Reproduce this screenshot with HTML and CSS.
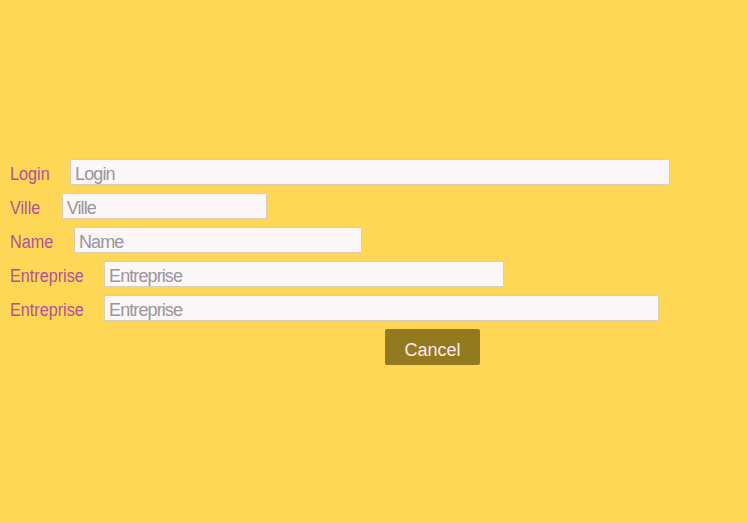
FILE: index.html
```html
<!DOCTYPE html>
<html>
<head>
<meta charset="utf-8">
<link rel="stylesheet" href="styles.css">
</head>
<body>
<form class="form">
  <div class="row"><label class="lbl">Login</label><input class="inp w-login" placeholder="Login"></div>
  <div class="row"><label class="lbl">Ville</label><input class="inp w-ville" placeholder="Ville"></div>
  <div class="row"><label class="lbl">Name</label><input class="inp w-name" placeholder="Name"></div>
  <div class="row"><label class="lbl">Entreprise</label><input class="inp w-ent1" placeholder="Entreprise"></div>
  <div class="row"><label class="lbl">Entreprise</label><input class="inp w-ent2" placeholder="Entreprise"></div>
  <div class="actions"><button type="button" class="btn">Cancel</button></div>
</form>
</body>
</html>
```
FILE: styles.css
```css
html, body {
  margin: 0;
  padding: 0;
  background: #ffd757;
  height: 100%;
}
body {
  font-family: "Liberation Sans", Arial, sans-serif;
}
.form {
  display: flex;
  flex-direction: column;
  gap: 8px;
  padding: 159px 0 0 10px;
}
.row {
  display: flex;
  align-items: center;
  height: 26px;
}
.lbl {
  display: inline-block;
  font-size: 18px;
  color: #b0519a;
  padding-top: 4px;
  transform: scaleX(0.9);
  transform-origin: left center;
}
.inp {
  box-sizing: border-box;
  height: 26px;
  margin: 0;
  padding: 4px 4px 0;
  border: 1px solid #d9cfb6;
  background: #fbf6f8;
  font-family: inherit;
  font-size: 18px;
  letter-spacing: -0.9px;
  color: #555;
  outline: none;
}
.inp::placeholder {
  color: #9c9599;
}
.w-login { width: 600px; margin-left: 16px; }
.w-ville { width: 205px; margin-left: 18px; }
.w-name { width: 288px; margin-left: 16px; }
.w-ent1 { width: 400px; margin-left: 12px; }
.w-ent2 { width: 555px; margin-left: 12px; }
.actions {
  display: flex;
  padding-left: 375px;
}
.btn {
  width: 95px;
  height: 36px;
  border: none;
  border-radius: 2px;
  background: #927b1e;
  color: #fbe9ef;
  font-family: inherit;
  font-size: 18px;
  padding: 6px 0 0;
}
```
